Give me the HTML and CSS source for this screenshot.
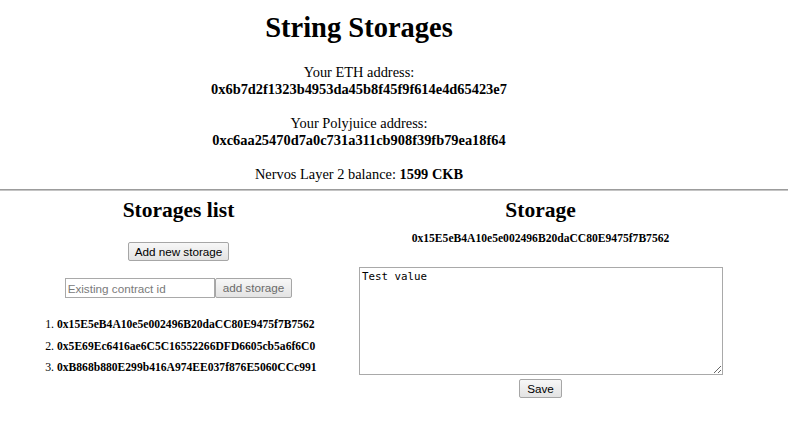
FILE: index.html
```html
<!DOCTYPE html>
<html>
<head>
<meta charset="utf-8">
<title>String Storages</title>
<link rel="stylesheet" href="styles.css">
</head>
<body class="page">
  <header class="top">
    <h1 class="title">String Storages</h1>
    <p class="info">Your ETH address:<br><b>0x6b7d2f1323b4953da45b8f45f9f614e4d65423e7</b><br><br>Your Polyjuice address:<br><b>0xc6aa25470d7a0c731a311cb908f39fb79ea18f64</b><br><br>Nervos Layer 2 balance: <b>1599 CKB</b></p>
  </header>
  <hr class="rule">
  <main class="cols">
    <section class="col col-list">
      <h2 class="col-title">Storages list</h2>
      <div class="new-row"><button class="btn" type="button">Add new storage</button></div>
      <div class="add-row"><input class="field" type="text" placeholder="Existing contract id"><button class="btn btn-muted" type="button">add storage</button></div>
      <ol class="list">
        <li class="item"><span class="item-addr">0x15E5eB4A10e5e002496B20daCC80E9475f7B7562</span></li>
        <li class="item"><span class="item-addr">0x5E69Ec6416ae6C5C16552266DFD6605cb5a6f6C0</span></li>
        <li class="item"><span class="item-addr">0xB868b880E299b416A974EE037f876E5060CCc991</span></li>
      </ol>
    </section>
    <section class="col col-storage">
      <h2 class="col-title">Storage</h2>
      <h5 class="addr">0x15E5eB4A10e5e002496B20daCC80E9475f7B7562</h5>
      <textarea class="value">Test value</textarea>
      <div class="save-row"><button class="btn btn-save" type="button">Save</button></div>
    </section>
  </main>
</body>
</html>
```
FILE: styles.css
```css
html, body {
  margin: 0;
  padding: 0;
  background: #ffffff;
}

.page {
  font-family: "Liberation Serif", "Times New Roman", serif;
  font-size: 14px;
  color: #000000;
}

.top {
  width: 718px;
  text-align: center;
}

.title {
  margin: 12px 0 21px;
  font-size: 28.5px;
  line-height: 31px;
  font-weight: bold;
}

.info {
  margin: 0;
  line-height: 17px;
  font-size: 14.4px;
}

.rule {
  margin: 6px 0 0;
  height: 0;
  border: 0;
  border-top: 1px solid #9c9c9c;
  border-bottom: 1px solid #c4c4c4;
}

.cols {
  display: grid;
  grid-template-columns: 357px 367px;
}

.col {
  text-align: center;
}

.col-title {
  margin: 7px 0 0;
  font-size: 21.5px;
  line-height: 24px;
  font-weight: bold;
}

.btn {
  font-family: "Liberation Sans", Arial, sans-serif;
  font-size: 11.7px;
  line-height: 13px;
  color: #000000;
  background: linear-gradient(#f7f7f7, #e3e3e3);
  border: 1px solid #a6a6a6;
  border-radius: 2px;
  padding: 2px 6px;
  margin: 0;
}

.btn-muted {
  color: #6a6a6a;
  padding: 2px 7px 3px;
}

.btn-save {
  padding: 2px 7px;
}

.new-row {
  margin-top: 20px;
}

.add-row {
  display: flex;
  justify-content: center;
  margin-top: 17px;
}

.field {
  box-sizing: border-box;
  width: 150px;
  height: 20px;
  margin: 0;
  padding: 1px 2px;
  border: 1px solid #a9a9a9;
  font-family: "Liberation Sans", Arial, sans-serif;
  font-size: 11.7px;
  color: #000000;
}

.field::placeholder {
  color: #7a7a7a;
}

.list {
  margin: 16px 0 0;
  padding: 0 0 0 57px;
  text-align: left;
  font-size: 11.8px;
  line-height: 20.5px;
}

.item-addr {
  font-size: 11.6px;
  font-weight: bold;
}

.addr {
  margin: 10px 0 21px;
  font-size: 11.6px;
  line-height: 14px;
  font-weight: bold;
}

.value {
  display: block;
  box-sizing: border-box;
  width: 364px;
  height: 108px;
  margin: 0 0 0 2px;
  padding: 2px;
  border: 1px solid #a9a9a9;
  font-family: "DejaVu Sans Mono", monospace;
  font-size: 10.8px;
  line-height: 13px;
  resize: both;
}

.save-row {
  margin-top: 4px;
}
```
